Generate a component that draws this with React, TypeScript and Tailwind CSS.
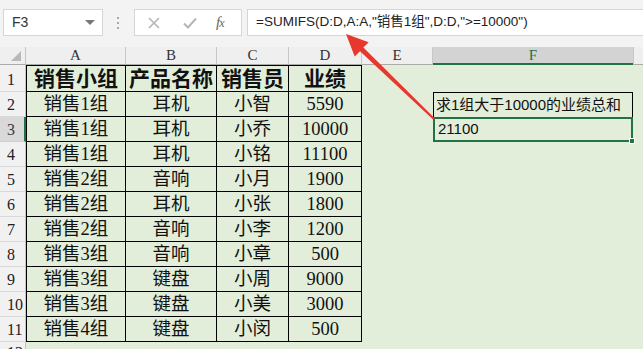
import type { ReactNode } from "react"

const rows = [
    ["销售1组", "耳机", "小智", "5590"],
    ["销售1组", "耳机", "小乔", "10000"],
    ["销售1组", "耳机", "小铭", "11100"],
    ["销售2组", "音响", "小月", "1900"],
    ["销售2组", "耳机", "小张", "1800"],
    ["销售2组", "音响", "小李", "1200"],
    ["销售3组", "音响", "小章", "500"],
    ["销售3组", "键盘", "小周", "9000"],
    ["销售3组", "键盘", "小美", "3000"],
    ["销售4组", "键盘", "小闵", "500"],
]

const cols = ["A", "B", "C", "D", "E", "F"]

// 행 머리 (1, 2, 3 ...)
function RowHead({ n, active = false }: { n: number; active?: boolean }) {
    return (
        <div className={
            active
            ? "flex items-end pl-[7px] pb-[1px] bg-[#d9d9d9] border-b border-[#d0d0d0] border-r-2 border-r-[#217346] text-[16px] leading-none text-[#3a3a3a] font-['Liberation_Serif',serif]"
            : "flex items-end pl-[7px] pb-[1px] bg-[#f1f1f1] border-b border-[#d8d8d8] border-r border-r-[#c4c4c4] text-[16px] leading-none text-[#222] font-['Liberation_Serif',serif]"
        }>
            <span className="pb-[2px]">{n}</span>
        </div>
    )
}

function Cell({ children, first = false, top = false, head = false }: { children: ReactNode; first?: boolean; top?: boolean; head?: boolean }) {
    let cls = "flex items-center justify-center border-r border-b border-black whitespace-nowrap text-[#111] font-['Liberation_Serif','Noto_Sans_CJK_SC',serif]"
    if (first) cls += " border-l"
    if (top) cls += " border-t"
    cls += head ? " text-[21px] font-bold pt-[2px]" : " text-[18.5px] pt-[1px]"
    return <div className={cls}>{children}</div>
}

export default function App() {
    return (
        <div className="relative w-[643px] h-[349px] overflow-hidden bg-[#e2eed9] font-['Liberation_Sans','Noto_Sans_CJK_SC',sans-serif]">
            {/* 수식 입력줄 */}
            <div className="flex items-center h-[47px] bg-[#f3f3f3] pb-[2px]">
                <div className="ml-[3px] w-[100px] h-[27px] flex items-center justify-between bg-white border border-[#d6d6d6] pl-[8px] pr-[7px]">
                    <span className="text-[14px] text-[#333]">F3</span>
                    <span className="w-0 h-0 border-l-[5px] border-r-[5px] border-t-[5px] border-l-transparent border-r-transparent border-t-[#777]" />
                </div>
                <div className="ml-[14px] flex flex-col gap-[3px]">
                    <span className="w-[2px] h-[2px] bg-[#aaa]" />
                    <span className="w-[2px] h-[2px] bg-[#aaa]" />
                    <span className="w-[2px] h-[2px] bg-[#aaa]" />
                </div>
                <div className="ml-[15px] w-[108px] h-[27px] flex items-center bg-white border border-[#d6d6d6]">
                    <svg width="12" height="12" viewBox="0 0 12 12" className="ml-[13px]">
                        <path d="M1 1 L11 11 M11 1 L1 11" stroke="#b5b5b5" strokeWidth="1.6" />
                    </svg>
                    <svg width="14" height="12" viewBox="0 0 14 12" className="ml-[23px]">
                        <path d="M1 6.5 L5 10.5 L13 1.5" stroke="#b5b5b5" strokeWidth="2" fill="none" />
                    </svg>
                    <span className="ml-[19px] italic text-[15px] text-[#666] font-['Liberation_Serif',serif] tracking-[-1px]">
                        f<span className="text-[12px]">x</span>
                    </span>
                </div>
                <div className="ml-[5px] flex-1 h-[27px] flex items-center bg-white border border-[#d6d6d6] border-r-0 pl-[8px] text-[13.5px] text-[#222] whitespace-nowrap">
                    =SUMIFS(D:D,A:A,"销售1组",D:D,"&gt;=10000")
                </div>
            </div>

            {/* 시트 */}
            <div className="grid grid-cols-[26px_100px_91px_72px_73px_71px_200px_1fr] grid-rows-[18px_27px_repeat(10,25px)_25px]">
                {/* 열 머리 */}
                <div className="flex items-end justify-end pr-[4px] pb-[3px] bg-[#efefef] border-r border-b border-[#c4c4c4] border-b-[#ababab]">
                    <svg width="10" height="10" viewBox="0 0 10 10">
                        <polygon points="10,0 10,10 0,10" fill="#b8b8b8" />
                    </svg>
                </div>
                {cols.map(c => (
                    <div key={c} className={
                        c == "F"
                        ? "flex items-center justify-center bg-[#d3d3d3] border-b-2 border-[#217346] text-[15px] text-[#217346] font-['Liberation_Serif',serif]"
                        : "flex items-center justify-center bg-[#efefef] border-r border-[#c8c8c8] border-b border-b-[#ababab] text-[15px] text-[#333] font-['Liberation_Serif',serif]"
                    }>{c}</div>
                ))}
                <div className="bg-[#efefef] border-l border-[#c8c8c8] border-b border-b-[#ababab]" />

                {/* 1행 */}
                <RowHead n={1} />
                <Cell first top head>销售小组</Cell>
                <Cell top head>产品名称</Cell>
                <Cell top head>销售员</Cell>
                <Cell top head>业绩</Cell>
                <div />
                <div />
                <div />

                {rows.map((r, idx) => (
                    <div key={idx} className="contents">
                        <RowHead n={idx + 2} active={idx == 1} />
                        <Cell first>{r[0]}</Cell>
                        <Cell>{r[1]}</Cell>
                        <Cell>{r[2]}</Cell>
                        <Cell>{r[3]}</Cell>
                        <div />
                        {idx == 0 && (
                            <div className="flex items-center pl-[2px] border-l border-r border-t border-black text-[15px] text-[#111] whitespace-nowrap">
                                求1组大于10000的业绩总和
                            </div>
                        )}
                        {idx == 1 && (
                            <div className="relative flex items-center pl-[3px] border-2 border-[#217346] text-[15px] text-[#111]">
                                21100
                                <span className="absolute right-[-4px] bottom-[-4px] w-[6px] h-[6px] bg-[#217346] border border-white" />
                            </div>
                        )}
                        {idx > 1 && <div />}
                        <div />
                    </div>
                ))}

                <div className="flex items-start pl-[7px] bg-[#f1f1f1] border-r border-[#c4c4c4] text-[16px] leading-none text-[#222] font-['Liberation_Serif',serif]">
                    <span className="pt-[3px]">12</span>
                </div>
            </div>

            {/* 빨간 화살표 */}
            <svg width="643" height="349" className="absolute inset-0 pointer-events-none">
                <polygon
                    points="346,34 368.7,42.2 363.4,47.6 434.7,118.3 433.3,119.7 360,51.2 354.7,56.6"
                    fill="#e8372c"
                />
            </svg>
        </div>
    )
}
